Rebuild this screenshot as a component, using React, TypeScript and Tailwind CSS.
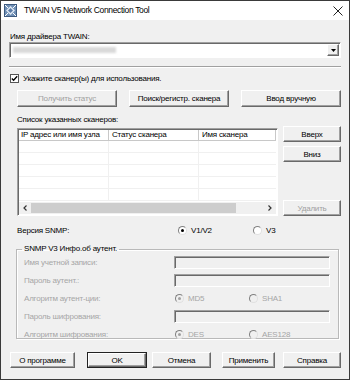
import React from "react";

const raised =
  "border border-t-white border-l-white border-r-[#696969] border-b-[#696969] shadow-[inset_-1px_-1px_0_#a0a0a0] bg-[#f0f0f0]";
const sunken =
  "border border-t-[#a0a0a0] border-l-[#a0a0a0] border-r-white border-b-white shadow-[inset_1px_1px_0_#696969]";

function Btn({
  label,
  w,
  h = "h-[17px]",
  disabled,
  cls = "",
}: {
  label: string;
  w: string;
  h?: string;
  disabled?: boolean;
  cls?: string;
}) {
  return (
    <div
      className={`${w} ${h} ${raised} flex items-center justify-center whitespace-nowrap ${
        disabled ? "text-[#a0a0a0]" : "text-black"
      } ${cls}`}
    >
      {label}
    </div>
  );
}

function Radio({ checked, disabled }: { checked?: boolean; disabled?: boolean }) {
  return (
    <div
      className={`w-[9px] h-[9px] rounded-full border border-t-[#808080] border-l-[#808080] border-r-[#e0e0e0] border-b-[#e0e0e0] ${
        disabled ? "bg-[#f0f0f0]" : "bg-white"
      } flex items-center justify-center`}
    >
      {checked && (
        <div
          className={`w-[3px] h-[3px] rounded-full ${
            disabled ? "bg-[#a0a0a0]" : "bg-black"
          }`}
        />
      )}
    </div>
  );
}

function GroupRow({
  label,
  children,
}: {
  label: string;
  children: React.ReactNode;
}) {
  return (
    <div className="h-[18px] flex items-center">
      <div className="w-[153px] pl-[3px] text-[#a6a6a6]">{label}</div>
      {children}
    </div>
  );
}

function DisabledInput() {
  return <div className={`w-[156px] h-[13px] bg-[#f0f0f0] ${sunken}`} />;
}

function RadioPair({ a, b }: { a: string; b: string }) {
  return (
    <div className="flex items-center text-[#a6a6a6]">
      <div className="w-[75px] flex items-center gap-[4px] pl-[1px]">
        <Radio checked disabled />
        <span>{a}</span>
      </div>
      <div className="flex items-center gap-[4px]">
        <Radio disabled />
        <span>{b}</span>
      </div>
    </div>
  );
}

export default function App() {
  return (
    <div className="w-[350px] h-[380px] border border-[#3a3a3a] bg-[#f0f0f0] flex flex-col font-['Liberation_Sans',Arial,sans-serif] text-[8px] tracking-[-0.2px] leading-[11px] text-black overflow-hidden">
      {/* Title bar */}
      <div className="h-[19px] bg-white flex items-center shrink-0">
        <svg width="13" height="13" viewBox="0 0 13 13" className="ml-[3px]">
          <rect x="0.5" y="0.5" width="12" height="12" fill="#6f8fb5" stroke="#3d5a80" />
          <path d="M2 6.5 L6.5 2 L11 6.5 L6.5 11 Z" fill="#dfe8f3" />
          <path d="M4 6.5 L6.5 4 L9 6.5 L6.5 9 Z" fill="#5a7aa5" />
          <path d="M1 1 L4 4 M12 1 L9 4 M1 12 L4 9 M12 12 L9 9" stroke="#ffffff" strokeWidth="1" />
        </svg>
        <span className="ml-[7px] text-[8.5px] tracking-[-0.35px]">TWAIN V5 Network Connection Tool</span>
        <svg width="10" height="10" viewBox="0 0 10 10" className="ml-auto mr-[6px]">
          <path d="M0.5 0.5 L9.5 9.5 M9.5 0.5 L0.5 9.5" stroke="#222" strokeWidth="1" />
        </svg>
      </div>

      {/* Body */}
      <div className="flex flex-col pl-[8px] pr-[8px]">
        <div className="mt-[11px] h-[11px] pl-[1px]">Имя драйвера TWAIN:</div>
        <div className={`h-[16px] bg-white ${sunken} flex items-center pl-[3px] pr-[1px]`}>
          <div className="w-[103px] h-[6px] bg-[#d9d9d9] blur-[1px]" />
          <div className={`ml-auto w-[12px] h-[12px] ${raised} flex items-center justify-center`}>
            <svg width="5" height="3" viewBox="0 0 5 3">
              <path d="M0 0 L5 0 L2.5 3 Z" fill="#000" />
            </svg>
          </div>
        </div>

        <div className="mt-[8px] h-[2px] border-t border-t-[#a0a0a0] border-b border-b-white" />

        <div className="mt-[4px] h-[12px] flex items-center gap-[4px] pl-[1px]">
          <div className="w-[9px] h-[9px] bg-white border border-[#555] flex items-center justify-center">
            <svg width="7" height="7" viewBox="0 0 7 7">
              <path d="M0.8 3.5 L2.6 5.3 L6.2 1.2" stroke="#000" strokeWidth="1.3" fill="none" />
            </svg>
          </div>
          <span>Укажите сканер(ы) для использования.</span>
        </div>

        <div className="mt-[6px] flex">
          <Btn label="Получить статус" w="w-[100px]" disabled cls="ml-[8px]" />
          <Btn label="Поиск/регистр. сканера" w="w-[100px]" cls="ml-[12px]" />
          <Btn label="Ввод вручную" w="w-[100px]" cls="ml-[12px]" />
        </div>

        <div className="mt-[7px] h-[11px] pl-[8px]">Список указанных сканеров:</div>

        <div className="mt-[3px] flex">
          <div className={`ml-[8px] w-[261px] h-[88px] bg-white ${sunken} flex flex-col p-[1px]`}>
            <div className="h-[11px] flex border-b border-b-[#c8c8c8] shrink-0 whitespace-nowrap">
              <div className="w-[90px] border-r border-r-[#c8c8c8] pl-[2px] leading-[10px]">IP адрес или имя узла</div>
              <div className="w-[90px] border-r border-r-[#c8c8c8] pl-[3px] leading-[10px]">Статус сканера</div>
              <div className="w-[77px] border-r border-r-[#c8c8c8] pl-[3px] leading-[10px]">Имя сканера</div>
            </div>
            <div className="flex-1 flex flex-col">
              {[0, 1, 2, 3, 4].map((i) => (
                <div key={i} className="h-[12px] flex border-b border-b-[#f0f0f0]">
                  <div className="w-[90px] border-r border-r-[#f0f0f0]" />
                  <div className="w-[90px] border-r border-r-[#f0f0f0]" />
                  <div className="w-[77px]" />
                </div>
              ))}
            </div>
            <div className="h-[12px] bg-[#f0f0f0] flex items-center shrink-0">
              <div className="w-[12px] flex items-center justify-center">
                <svg width="4" height="6" viewBox="0 0 4 6">
                  <path d="M3.5 0.5 L1 3 L3.5 5.5" stroke="#333" strokeWidth="1.2" fill="none" />
                </svg>
              </div>
              <div className="w-[205px] h-[10px] bg-[#cdcdcd]" />
              <div className="ml-auto w-[12px] flex items-center justify-center">
                <svg width="4" height="6" viewBox="0 0 4 6">
                  <path d="M0.5 0.5 L3 3 L0.5 5.5" stroke="#333" strokeWidth="1.2" fill="none" />
                </svg>
              </div>
            </div>
          </div>
          <div className="ml-[5px] w-[58px] flex flex-col">
            <Btn label="Вверх" w="w-[58px]" h="h-[16px]" cls="-mt-[2px]" />
            <Btn label="Вниз" w="w-[58px]" h="h-[16px]" cls="mt-[4px]" />
            <Btn label="Удалить" w="w-[58px]" h="h-[16px]" disabled cls="mt-auto" />
          </div>
        </div>

        <div className="mt-[8px] h-[12px] flex items-center pl-[8px]">
          <div className="w-[161px]">Версия SNMP:</div>
          <div className="w-[75px] flex items-center gap-[4px]">
            <Radio checked />
            <span>V1/V2</span>
          </div>
          <div className="flex items-center gap-[4px]">
            <Radio />
            <span>V3</span>
          </div>
        </div>

        <fieldset className="mt-[8px] ml-[7px] w-[323px] h-[95px] border border-[#b9b9b9] shadow-[1px_1px_0_#ffffff,inset_1px_1px_0_#ffffff] px-[4px] pb-0 pt-0 min-w-0">
          <legend className="px-[2px] ml-[1px] leading-[10px]">SNMP V3 Инфо.об аутент.</legend>
          <div className="flex flex-col -mt-[1px]">
            <GroupRow label="Имя учетной записи:">
              <DisabledInput />
            </GroupRow>
            <GroupRow label="Пароль аутент.:">
              <DisabledInput />
            </GroupRow>
            <GroupRow label="Алгоритм аутент-ции:">
              <RadioPair a="MD5" b="SHA1" />
            </GroupRow>
            <GroupRow label="Пароль шифрования:">
              <DisabledInput />
            </GroupRow>
            <GroupRow label="Алгоритм шифрования:">
              <RadioPair a="DES" b="AES128" />
            </GroupRow>
          </div>
        </fieldset>

        <div className="mt-[13px] flex">
          <Btn label="О программе" w="w-[65px]" h="h-[16px]" cls="ml-[1px]" />
          <div className="ml-[12px] w-[60px] h-[16px] border border-[#222] flex">
            <div className={`flex-1 ${raised} flex items-center justify-center`}>OK</div>
          </div>
          <Btn label="Отмена" w="w-[59px]" h="h-[16px]" cls="ml-[5px]" />
          <Btn label="Применить" w="w-[53px]" h="h-[16px]" cls="ml-[11px]" />
          <Btn label="Справка" w="w-[58px]" h="h-[16px]" cls="ml-[8px]" />
        </div>
      </div>
    </div>
  );
}
